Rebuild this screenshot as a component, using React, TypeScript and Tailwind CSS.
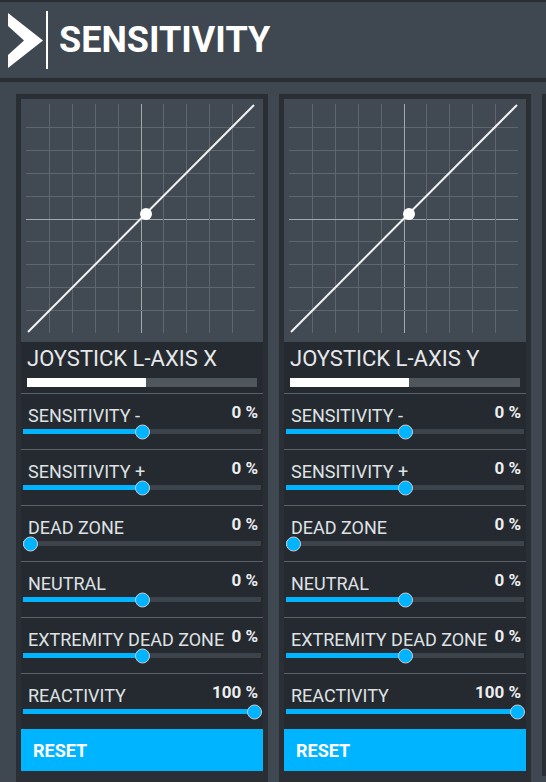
const SETTINGS = [
  { label: "SENSITIVITY -", value: 0, pos: 0.5 },
  { label: "SENSITIVITY +", value: 0, pos: 0.5 },
  { label: "DEAD ZONE", value: 0, pos: 0 },
  { label: "NEUTRAL", value: 0, pos: 0.5 },
  { label: "EXTREMITY DEAD ZONE", value: 0, pos: 0.5 },
  { label: "REACTIVITY", value: 100, pos: 1 },
];

const STEP = 229 / 10;

function Curve() {
  const lines = Array.from({ length: 9 }, (_, i) => 5 + STEP * (i + 1));
  return (
    <svg width="242" height="243" className="block bg-[#414952]">
      {lines.map((p, i) => (
        <g key={i} stroke={i === 4 ? "#a3a8ad" : "#5f666e"} strokeWidth="1">
          <line x1={Math.round(p) + 0.5} y1="5" x2={Math.round(p) + 0.5} y2="234" />
          <line x1="5" y1={Math.round(p) + 0.5} x2="234" y2={Math.round(p) + 0.5} />
        </g>
      ))}
      <line x1="7" y1="233" x2="233" y2="6" stroke="#f2f2f2" strokeWidth="2" />
      <circle cx="125" cy="115" r="6" fill="#ffffff" />
    </svg>
  );
}

function Slider({ pos }: { pos: number }) {
  const center = 7 + pos * 224;
  return (
    <div className="relative mx-[2px] mt-[3px] h-[5px] bg-[#3c434b]">
      <div className="h-full bg-[#00b4ff]" style={{ width: center }} />
      <div
        className="absolute top-1/2 h-[15px] w-[15px] -translate-y-1/2 rounded-full border border-[#c9cdd1] bg-[#00b4ff]"
        style={{ left: center - 7.5 }}
      />
    </div>
  );
}

function Panel({ title }: { title: string }) {
  return (
    <div className="w-[252px] shrink-0 bg-[#2a2f35] p-[5px]">
      <Curve />
      <div className="bg-[#252a30]">
        <div className="pl-[6px] pt-[4px] text-[22px] leading-[26px] text-[#e6e8ea]">{title}</div>
        <div className="mx-[6px] mb-[6px] mt-[6px] flex h-[9px] bg-[#4f565c]">
          <div className="w-[119px] bg-white" />
        </div>
        {SETTINGS.map((s) => (
          <div key={s.label} className="h-[56px] border-t border-[#5b6168]">
            <div className="flex items-start justify-between pl-[7px] pr-[5px] pt-[8px]">
              <span className="mt-[4px] text-[18px] leading-[20px] text-[#dfe2e5]">{s.label}</span>
              <span className="text-[17px] font-bold leading-[20px] text-[#eceef0]">{s.value} %</span>
            </div>
            <Slider pos={s.pos} />
          </div>
        ))}
        <div className="flex h-[42px] items-center bg-[#00b4ff] pl-[12px] text-[18px] font-bold text-white">
          RESET
        </div>
      </div>
    </div>
  );
}

export default function App() {
  return (
    <div className="h-[782px] w-[546px] overflow-hidden bg-[#2a2f35] font-['Roboto',sans-serif]">
      <div className="mt-[2px] flex h-[76px] items-center bg-[#3f4751] pl-[8px]">
        <svg width="35" height="56" viewBox="0 0 35 56" className="block">
          <polygon points="0,1 35,28.5 0,56 0,43 16,28.5 0,14" fill="#ffffff" />
        </svg>
        <div className="ml-[3px] h-[58px] w-[2px] bg-white" />
        <h1 className="ml-[11px] text-[36px] font-bold leading-none text-white">SENSITIVITY</h1>
      </div>
      <div className="mt-[4px] flex h-full gap-[11px] bg-[#3f4751] pl-[16px] pt-[12px]">
        <Panel title="JOYSTICK L-AXIS X" />
        <Panel title="JOYSTICK L-AXIS Y" />
        {/* next panel, cut off at the window edge */}
        <div className="h-[682px] w-[252px] shrink-0 bg-[#2a2f35]" />
      </div>
    </div>
  );
}
